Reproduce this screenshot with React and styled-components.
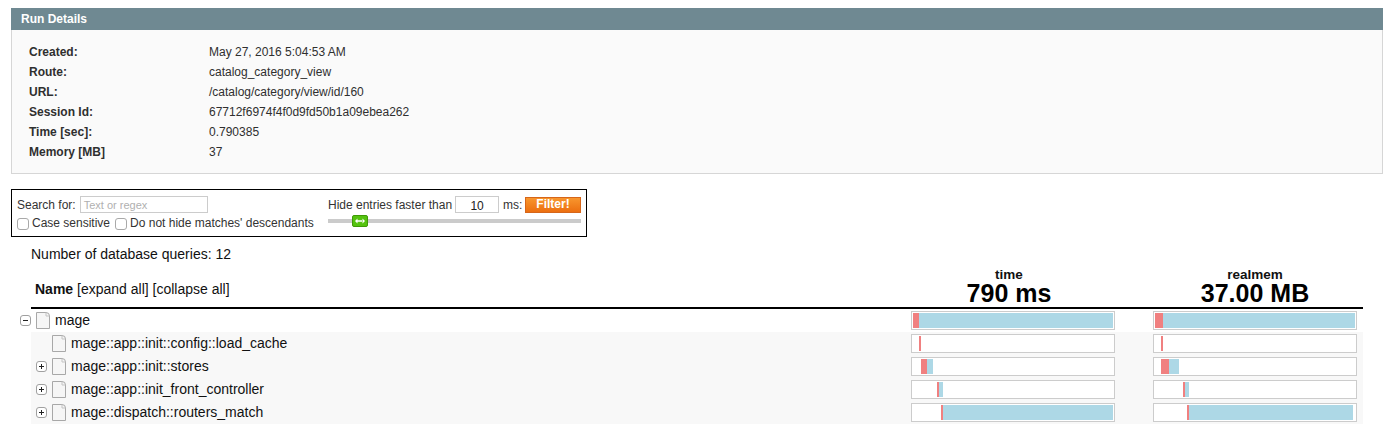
import React from 'react'
import styled, {createGlobalStyle} from 'styled-components'

const GlobalStyle = createGlobalStyle`
  html, body {
    margin: 0;
    background: #fff;
  }
  body {
    font-family: "Liberation Sans", Arial, sans-serif;
    color: #2f2f2f;
    -webkit-font-smoothing: antialiased;
  }
`

const Page = styled.div`
  width: 1390px;
  height: 433px;
  box-sizing: border-box;
  padding: 8px 7px 0 11px;
  overflow: hidden;
`

const DetailsHeader = styled.h4`
  margin: 0;
  height: 22px;
  padding: 0 10px;
  background: #6f8992;
  color: #fff;
  font-size: 12px;
  line-height: 23px;
  font-weight: bold;
`

const DetailsBody = styled.div`
  height: 144px;
  box-sizing: border-box;
  padding: 12px 17px 0;
  background: #fafafa;
  border: 1px solid #d6d6d6;
  border-top: 0;
`

const DetailRow = styled.div`
  display: grid;
  grid-template-columns: 180px 1fr;
  font-size: 12px;
  line-height: 20px;
`

const DetailLabel = styled.span`
  font-weight: bold;
`

const FilterBox = styled.form`
  margin-top: 15px;
  width: 576px;
  height: 48px;
  box-sizing: border-box;
  border: 1px solid #000;
  padding: 6px 5px 0 5px;
  display: flex;
  justify-content: space-between;
  font-size: 12px;
  color: #333;
  white-space: nowrap;
`

const FilterColumn = styled.div`
  display: flex;
  flex-direction: column;
`

const RightColumn = styled(FilterColumn)`
  width: 253px;
`

const FilterLine = styled.div`
  display: flex;
  align-items: center;
  height: 17px;
`

const CheckLine = styled(FilterLine)`
  margin-top: 3px;
  height: 14px;
`

const SearchInput = styled.div`
  margin-left: 4px;
  width: 128px;
  height: 17px;
  box-sizing: border-box;
  border: 1px solid #ccc;
  padding-left: 3px;
  font-size: 11px;
  line-height: 16px;
  color: #b0b0b0;
`

const CheckBox = styled.span`
  flex: none;
  box-sizing: border-box;
  width: 12px;
  height: 12px;
  margin: 1px 3px 0 ${p => p.$left}px;
  border: 1px solid #a9a9a9;
  border-radius: 3px;
  background: #fff;
`

const MsInput = styled.div`
  margin: 0 4px 0 3px;
  width: 44px;
  height: 17px;
  box-sizing: border-box;
  border: 1px solid #ccc;
  text-align: center;
  font-size: 12px;
  line-height: 18px;
  color: #222;
`

const FilterButton = styled.button`
  margin-left: auto;
  flex: none;
  width: 56px;
  height: 16px;
  padding: 0;
  border: 1px solid #d6661a;
  background: linear-gradient(#f8962e, #ec6f10);
  color: #fff;
  font: bold 12px "Liberation Sans", Arial, sans-serif;
  line-height: 13px;
`

const SliderTrack = styled.div`
  position: relative;
  margin-top: 6px;
  height: 4px;
  background: #cbcbcb;
`

const SliderHandle = styled.span`
  position: absolute;
  left: 24px;
  top: -4px;
  width: 16px;
  height: 12px;
  display: flex;
  align-items: center;
  justify-content: center;
  box-sizing: border-box;
  border: 1px solid #3f9a06;
  border-radius: 2px;
  background: #55c30f;
`

const Queries = styled.div`
  margin: 8px 0 0 20px;
  font-size: 14px;
  line-height: 18px;
  color: #111;
`

const Table = styled.div`
  margin-left: 20px;
  width: 1332px;
`

const HeadRow = styled.div`
  height: 44px;
  display: grid;
  grid-template-columns: 880px 242px 210px;
  align-items: end;
  border-bottom: 2px solid #000;
  color: #111;
`

const NameHead = styled.div`
  padding: 0 0 9px 4px;
  font-size: 14px;
  line-height: 18px;
`

const MetricHead = styled.div`
  width: ${p => p.$width}px;
  padding-bottom: 2px;
  text-align: center;
  white-space: nowrap;
  font-size: 13.5px;
  line-height: 14px;
  font-weight: bold;
`

const MetricValue = styled.div`
  font-size: 25px;
  line-height: 23px;
  font-weight: bold;
  color: #000;
`

const Row = styled.div`
  height: 23px;
  display: grid;
  grid-template-columns: 880px 242px 210px;
  align-items: center;
  background: ${p => (p.$alt ? '#f8f8f8' : '#fff')};
`

const NameCell = styled.div`
  display: flex;
  align-items: center;
  margin-left: ${p => p.$indent}px;
  font-size: 14px;
  line-height: 18px;
  color: #111;
`

const Toggle = styled.span`
  flex: none;
  width: 11px;
  height: 11px;
  margin-right: 5px;
  svg {
    display: block;
  }
`

const FileIcon = styled.svg`
  flex: none;
  margin-right: 5px;
`

const NameText = styled.span`
  margin-top: -2px;
`

const Bar = styled.div`
  width: 204px;
  height: 19px;
  box-sizing: border-box;
  border: 1px solid #cccccc;
  padding: 1px;
  display: flex;
  background: #fff;
`

const Segment = styled.span`
  height: 15px;
  background: ${p => (p.$kind === 'own' ? '#f08080' : '#add8e6')};
`

const ToggleIcon = ({open}) => (
  <Toggle>
    <svg width="11" height="11" viewBox="0 0 11 11">
      <rect x=".5" y=".5" width="10" height="10" rx="2.500" fill="#fff" stroke="#a0a0a0" />
      <path d="M3 5.500h5" stroke="#222" />
      {!open && <path d="M5.500 3v5" stroke="#222" />}
    </svg>
  </Toggle>
)

const PageIcon = () => (
  <FileIcon width="14" height="17" viewBox="0 0 14 17">
    <path d="M.5.500h9.500q3.500 0 3.500 3.500v12.500h-13z" fill="#f6f6f6" stroke="#a8a8a8" />
    <path d="M10 .500v3.500h3.500" fill="none" stroke="#c4c4c4" />
  </FileIcon>
)

const details = [
  ['Created:', 'May 27, 2016 5:04:53 AM'],
  ['Route:', 'catalog_category_view'],
  ['URL:', '/catalog/category/view/id/160'],
  ['Session Id:', '67712f6974f4f0d9fd50b1a09ebea262'],
  ['Time [sec]:', '0.790385'],
  ['Memory [MB]', '37'],
]

// bar values are [offset, own, rest] in px of the 200px track
const rows = [
  {name: 'mage', indent: -11, toggle: 'open', time: [0, 6, 194], mem: [0, 8, 192]},
  {name: 'mage::app::init::config::load_cache', indent: 21, time: [6, 2, 0], mem: [6, 2, 0]},
  {name: 'mage::app::init::stores', indent: 5, toggle: 'closed', time: [8, 6, 6], mem: [6, 8, 10]},
  {name: 'mage::app::init_front_controller', indent: 5, toggle: 'closed', time: [24, 2, 4], mem: [28, 2, 4]},
  {name: 'mage::dispatch::routers_match', indent: 5, toggle: 'closed', time: [28, 2, 170], mem: [32, 2, 164]},
]

const RunBar = ({values}) => {
  const [offset, own, rest] = values
  return (
    <Bar>
      <Segment style={{marginLeft: offset, width: own}} $kind="own" />
      <Segment style={{width: rest}} $kind="rest" />
    </Bar>
  )
}

const App = () => {
  return (
    <Page>
      <GlobalStyle />
      <DetailsHeader>Run Details</DetailsHeader>
      <DetailsBody>
        {details.map(([label, value]) => (
          <DetailRow key={label}>
            <DetailLabel>{label}</DetailLabel>
            <span>{value}</span>
          </DetailRow>
        ))}
      </DetailsBody>

      <FilterBox>
        <FilterColumn>
          <FilterLine>
            Search for:
            <SearchInput>Text or regex</SearchInput>
          </FilterLine>
          <CheckLine>
            <CheckBox $left={0} />
            Case sensitive
            <CheckBox $left={5} />
            Do not hide matches' descendants
          </CheckLine>
        </FilterColumn>
        <RightColumn>
          <FilterLine>
            Hide entries faster than
            <MsInput>10</MsInput>
            ms:
            <FilterButton type="button">Filter!</FilterButton>
          </FilterLine>
          <SliderTrack>
            <SliderHandle>
              <svg width="10" height="6" viewBox="0 0 10 6">
                <path d="M0 3l2.500-2.500v5zM10 3l-2.500-2.500v5zM2 2.300h6v1.400h-6z" fill="#fff" />
              </svg>
            </SliderHandle>
          </SliderTrack>
        </RightColumn>
      </FilterBox>

      <Queries>Number of database queries: 12</Queries>

      <Table>
        <HeadRow>
          <NameHead>
            <b>Name</b> [expand all] [collapse all]
          </NameHead>
          <MetricHead $width={196}>
            time
            <MetricValue>790 ms</MetricValue>
          </MetricHead>
          <MetricHead $width={204}>
            realmem
            <MetricValue>37.00 MB</MetricValue>
          </MetricHead>
        </HeadRow>
        {rows.map((row, i) => (
          <Row key={row.name} $alt={i > 0}>
            <NameCell $indent={row.indent}>
              {row.toggle && <ToggleIcon open={row.toggle === 'open'} />}
              <PageIcon />
              <NameText>{row.name}</NameText>
            </NameCell>
            <RunBar values={row.time} />
            <RunBar values={row.mem} />
          </Row>
        ))}
      </Table>
    </Page>
  )
}

export default App
